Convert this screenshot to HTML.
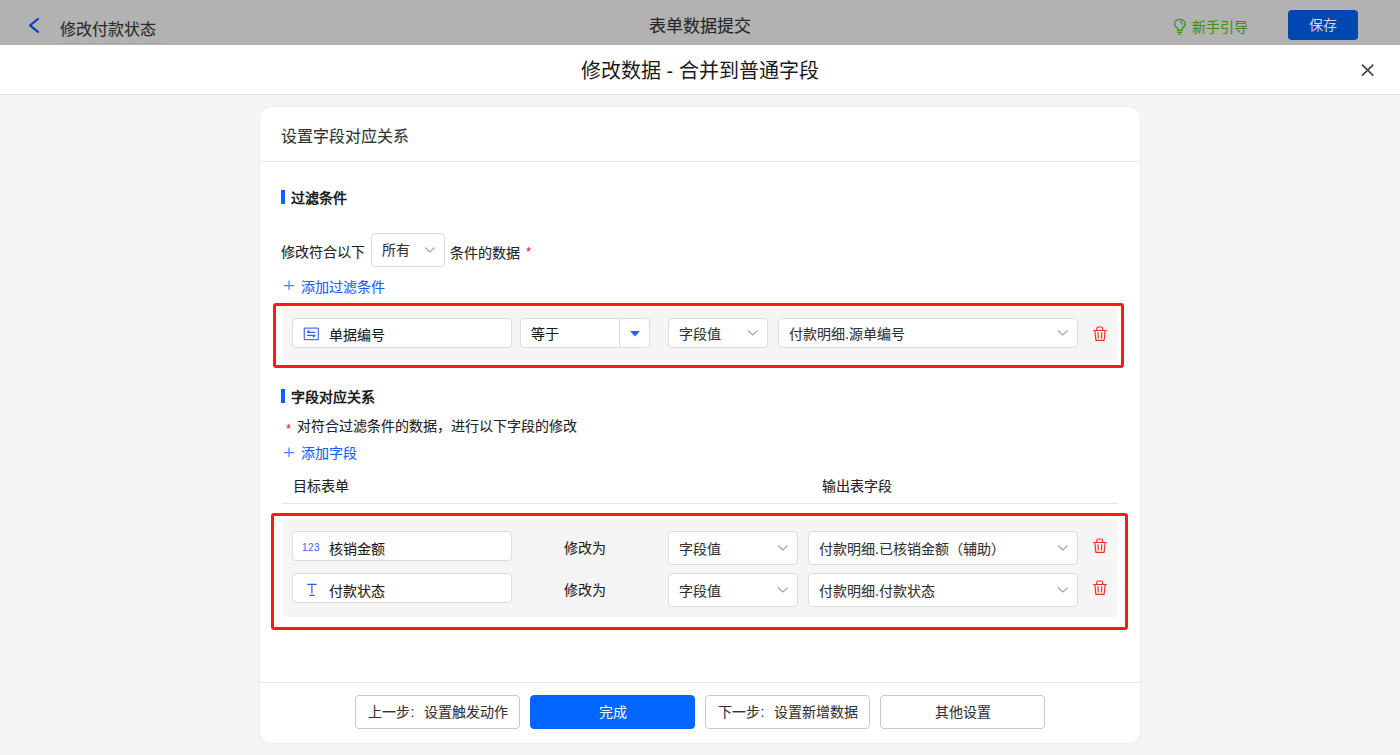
<!DOCTYPE html>
<html lang="zh-CN"><head><meta charset="utf-8">
<style>
*{box-sizing:border-box;margin:0;padding:0}
html,body{width:1400px;height:755px;overflow:hidden;background:#f5f5f5;font-family:"Liberation Sans",sans-serif;color:#333}
#topbar{position:absolute;left:0;top:0;width:1400px;height:45px;background:#b2b2b2}
#hdr{position:absolute;left:0;top:45px;width:1400px;height:50px;background:#fff;border-bottom:1px solid #e0e0e0}
.t{position:absolute;white-space:nowrap;line-height:1;-webkit-text-stroke:0.1px currentColor}
#card{position:absolute;left:260px;top:107px;width:880px;height:636px;background:#fff;border-radius:12px;box-shadow:0 0 4px rgba(0,0,0,0.06)}
.box{position:absolute;background:#fff;border:1px solid #dcdcdc;border-radius:4px}
.red{position:absolute;border:3px solid #ff1a10;border-radius:3px}
.grey{position:absolute;background:#f5f5f5;border-radius:2px}
.btn{position:absolute;top:695px;height:34px;border:1px solid #c9c9c9;border-radius:4px;background:#fff;font-size:14px;text-align:center;line-height:32px;color:#333;-webkit-text-stroke:0.1px currentColor}
.f14{font-size:14px}
.ic{position:absolute;width:24px;height:24px;overflow:visible}
.chev path{fill:none;stroke:#a3a6b0;stroke-width:1.15}
.trash path{fill:none;stroke:#f52a2a;stroke-width:1.15}
.blue path,.blue rect{fill:none;stroke:#2f62ff;stroke-width:1.25}
.blk{color:#1a1a1a}
</style></head><body>
<div id="topbar">
  <svg class="ic" style="left:20px;top:10px" viewBox="0 0 24 24"><path d="M18 9 L10 15.4 L18 21.8" fill="none" stroke="#0a3fc0" stroke-width="2.2" stroke-linecap="round" stroke-linejoin="round"/></svg>
  <div class="t" style="left:60px;top:22px;font-size:16px;color:#2a2a2a">修改付款状态</div>
  <div style="position:absolute;left:58px;top:43px;width:104px;height:1px;background:repeating-linear-gradient(90deg,#a0a0a0 0 3px,transparent 3px 5px)"></div>
  <div class="t" style="left:649px;top:18px;font-size:17px;color:#262626">表单数据提交</div>
  <svg class="ic" style="left:1168px;top:14px" viewBox="0 0 24 24"><g fill="none" stroke="#3c9416"><path stroke-width="1.3" d="M9.7 16.4 V14.5 C7.6 13.3 6.6 11.8 6.6 10 C6.6 7 9 5.3 11.8 5.3 C14.6 5.3 17 7 17 10 C17 11.8 16 13.3 13.9 14.5 V16.4 Z"/><path stroke-width="1.2" d="M9.4 18.4 H14 M10.4 20.3 H13.1 M11.8 7.3 C13 7.5 14.2 8.6 14.5 10.3"/></g></svg>
  <div class="t" style="left:1192px;top:20px;font-size:14px;color:#3f8f17">新手引导</div>
  <div style="position:absolute;left:1288px;top:10px;width:70px;height:30px;background:#0047b2;border-radius:4px;color:#d6d6d6;font-size:14px;text-align:center;line-height:30px">保存</div>
</div>
<div id="hdr">
  <div class="t" style="left:581px;top:16px;font-size:20px;color:#1a1a1a;-webkit-text-stroke:0">修改数据 - 合并到普通字段</div>
  <svg class="ic" style="left:1356px;top:13px" viewBox="0 0 24 24"><path d="M6 6.6 L17.3 17.6 M17.3 6.6 L6 17.6" fill="none" stroke="#404048" stroke-width="1.6"/></svg>
</div>
<div id="card">
  <div class="t" style="left:21px;top:22px;font-size:16px;color:#333">设置字段对应关系</div>
  <div style="position:absolute;left:0;top:54px;width:880px;border-top:1px solid #e8e8e8"></div>
</div>

<!-- filter section -->
<div style="position:absolute;left:281px;top:190px;width:4px;height:14px;background:#0a63ff"></div>
<div class="t f14" style="left:291px;top:191px;font-weight:bold;color:#1a1a1a;-webkit-text-stroke:0">过滤条件</div>
<div class="t f14" style="left:281px;top:245px;color:#222">修改符合以下</div>
<div class="box" style="left:371px;top:233px;width:74px;height:34px"></div>
<div class="t f14" style="left:382px;top:243px;color:#333">所有</div>
<svg class="ic chev" style="left:418px;top:238px" viewBox="0 0 24 24"><path d="M7 9.5 L11.8 14 L16.6 9.5"/></svg>
<div class="t f14" style="left:450px;top:246px;color:#222">条件的数据</div>
<div class="t" style="left:526px;top:245px;font-size:13px;color:#f5222d">*</div>
<svg class="ic blue" style="left:277px;top:274px" viewBox="0 0 24 24"><path d="M7 11.5 H17 M12 6.5 V16" stroke-width="1" style="stroke:#4f7fff"/></svg>
<div class="t f14" style="left:301px;top:280px;color:#1a5cff">添加过滤条件</div>

<div class="red" style="left:273px;top:303px;width:851px;height:65px"></div>
<div class="grey" style="left:282px;top:307px;width:836px;height:53px"></div>
<div class="box" style="left:292px;top:318px;width:220px;height:30px"></div>
<svg class="ic blue" style="left:300px;top:322px" viewBox="0 0 24 24"><rect x="4.3" y="6" width="14" height="11.7" rx="0.8" stroke-width="1.05" style="stroke:#4a72ff"/><path d="M7 10.3 H15.4 M7.2 10.3 L9.5 8.4 M7 13.4 H15.4 M15.2 13.4 L12.8 15.3" stroke-width="1.3"/></svg>
<div class="t f14 blk" style="left:329px;top:328px">单据编号</div>
<div class="box" style="left:520px;top:318px;width:130px;height:30px"></div>
<div style="position:absolute;left:619px;top:319px;height:28px;border-left:1px solid #dcdcdc"></div>
<div class="t f14 blk" style="left:531px;top:327px">等于</div>
<svg style="position:absolute;left:629px;top:330px" width="12" height="8" viewBox="0 0 12 8"><path d="M1 1 L11 1 L6 6.5 Z" fill="#1a66ff"/></svg>
<div class="box" style="left:668px;top:318px;width:100px;height:30px"></div>
<div class="t f14" style="left:679px;top:327px;color:#333">字段值</div>
<svg class="ic chev" style="left:741px;top:321px" viewBox="0 0 24 24"><path d="M7 9.5 L11.8 14 L16.6 9.5"/></svg>
<div class="box" style="left:778px;top:318px;width:300px;height:30px"></div>
<div class="t f14" style="left:789px;top:327px;color:#333">付款明细.源单编号</div>
<svg class="ic chev" style="left:1051px;top:321px" viewBox="0 0 24 24"><path d="M7 9.5 L11.8 14 L16.6 9.5"/></svg>
<svg class="ic trash" style="left:1088px;top:322px" viewBox="0 0 24 24"><path d="M8.8 8.4 V6.2 Q8.8 5 10 5 H13.4 Q14.6 5 14.6 6.2 V8.4 M5.1 8.5 H18.8 M6.9 9 L7.9 18.3 H16.1 L17.1 9 M9.9 10.3 L10.3 16.5 M13.8 10.3 L13.4 16.5"/></svg>

<!-- mapping section -->
<div style="position:absolute;left:281px;top:389px;width:4px;height:14px;background:#0a63ff"></div>
<div class="t f14" style="left:291px;top:390px;font-weight:bold;color:#1a1a1a;-webkit-text-stroke:0">字段对应关系</div>
<div class="t" style="left:286px;top:422px;font-size:13px;color:#f5222d">*</div>
<div class="t f14" style="left:297px;top:419px;color:#222">对符合过滤条件的数据，进行以下字段的修改</div>
<svg class="ic blue" style="left:277px;top:441px" viewBox="0 0 24 24"><path d="M7 11.5 H17 M12 6.5 V16" stroke-width="1" style="stroke:#4f7fff"/></svg>
<div class="t f14" style="left:301px;top:446px;color:#1a5cff">添加字段</div>
<div class="t f14" style="left:293px;top:479px;color:#222">目标表单</div>
<div class="t f14" style="left:822px;top:479px;color:#222">输出表字段</div>
<div style="position:absolute;left:282px;top:503px;width:836px;border-top:1px solid #e6e6e6"></div>

<div class="red" style="left:271px;top:513px;width:857px;height:117px"></div>
<div class="grey" style="left:282px;top:519px;width:836px;height:98px"></div>

<div class="box" style="left:292px;top:531px;width:220px;height:30px"></div>
<div class="t" style="left:302px;top:543px;font-size:10px;letter-spacing:0.5px;color:#4a6cf7">123</div>
<div class="t f14 blk" style="left:329px;top:542px">核销金额</div>
<div class="t f14" style="left:564px;top:541px;color:#222">修改为</div>
<div class="box" style="left:668px;top:531px;width:130px;height:34px"></div>
<div class="t f14" style="left:679px;top:542px;color:#333">字段值</div>
<svg class="ic chev" style="left:771px;top:536px" viewBox="0 0 24 24"><path d="M7 9.5 L11.8 14 L16.6 9.5"/></svg>
<div class="box" style="left:808px;top:531px;width:270px;height:34px"></div>
<div class="t f14" style="left:819px;top:542px;color:#333">付款明细.已核销金额（辅助）</div>
<svg class="ic chev" style="left:1051px;top:536px" viewBox="0 0 24 24"><path d="M7 9.5 L11.8 14 L16.6 9.5"/></svg>
<svg class="ic trash" style="left:1088px;top:534px" viewBox="0 0 24 24"><path d="M8.8 8.4 V6.2 Q8.8 5 10 5 H13.4 Q14.6 5 14.6 6.2 V8.4 M5.1 8.5 H18.8 M6.9 9 L7.9 18.3 H16.1 L17.1 9 M9.9 10.3 L10.3 16.5 M13.8 10.3 L13.4 16.5"/></svg>

<div class="box" style="left:292px;top:573px;width:220px;height:30px"></div>
<svg class="ic blue" style="left:300px;top:576px" viewBox="0 0 24 24"><path d="M7.2 8.4 H16.7 M11.9 8.4 V17.6 M9.3 19.4 H14.8" stroke-width="1.2"/></svg>
<div class="t f14 blk" style="left:329px;top:584px">付款状态</div>
<div class="t f14" style="left:564px;top:583px;color:#222">修改为</div>
<div class="box" style="left:668px;top:573px;width:130px;height:34px"></div>
<div class="t f14" style="left:679px;top:584px;color:#333">字段值</div>
<svg class="ic chev" style="left:771px;top:578px" viewBox="0 0 24 24"><path d="M7 9.5 L11.8 14 L16.6 9.5"/></svg>
<div class="box" style="left:808px;top:573px;width:270px;height:34px"></div>
<div class="t f14" style="left:819px;top:584px;color:#333">付款明细.付款状态</div>
<svg class="ic chev" style="left:1051px;top:578px" viewBox="0 0 24 24"><path d="M7 9.5 L11.8 14 L16.6 9.5"/></svg>
<svg class="ic trash" style="left:1088px;top:576px" viewBox="0 0 24 24"><path d="M8.8 8.4 V6.2 Q8.8 5 10 5 H13.4 Q14.6 5 14.6 6.2 V8.4 M5.1 8.5 H18.8 M6.9 9 L7.9 18.3 H16.1 L17.1 9 M9.9 10.3 L10.3 16.5 M13.8 10.3 L13.4 16.5"/></svg>

<!-- footer -->
<div style="position:absolute;left:260px;top:682px;width:880px;border-top:1px solid #e8e8e8"></div>
<div class="btn" style="left:355px;width:165px">上一步<span style="display:inline-block;width:14px;text-align:left;padding-left:1px">:</span>设置触发动作</div>
<div class="btn" style="left:530px;width:165px;background:#0066ff;border-color:#0066ff;color:#fff;-webkit-text-stroke:0">完成</div>
<div class="btn" style="left:705px;width:165px">下一步<span style="display:inline-block;width:14px;text-align:left;padding-left:1px">:</span>设置新增数据</div>
<div class="btn" style="left:880px;width:165px">其他设置</div>
</body></html>
